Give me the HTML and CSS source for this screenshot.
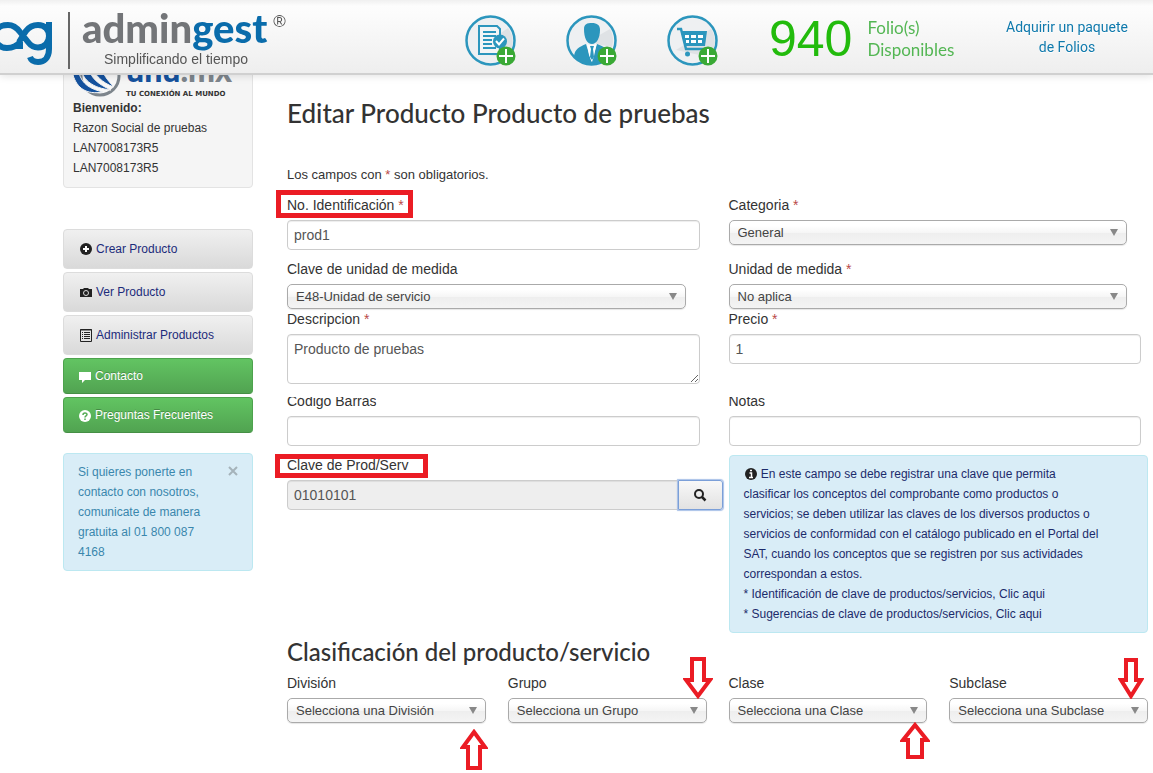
FILE: index.html
```html
<!DOCTYPE html>
<html lang="es">
<head>
<meta charset="utf-8">
<meta name="viewport" content="width=device-width, initial-scale=1">
<title>Editar Producto - admingest</title>
<link rel="stylesheet" href="styles.css">
</head>
<body>
<header class="topbar">
  <div class="brand">
    <svg class="brand-mark" width="53" height="52" viewBox="0 0 53 52" aria-hidden="true">
      <g fill="none" stroke="#0a6cab" stroke-width="6">
        <path d="M20 34V27C17 31 13 33 7 33C0 33 -5 28 -5 21S0 10 8 10C13 10 17 13 20 17L28 27C31 31 34 32.500 38 32.500C45 32.500 49 27 49 21S45 10 38 10C33 10 29 12 26 16L19 27"/>
        <path d="M49 7V34C49 43 44 47 38 47C34 47 31 45 30 42"/>
      </g>
    </svg>
    <div class="brand-text">
      <div class="brand-name">admin<span>gest</span><sup>®</sup></div>
      <div class="brand-slogan">Simplificando el tiempo</div>
    </div>
  </div>
  <nav class="shortcuts">
    <a href="#" aria-label="Nueva factura">
      <svg width="52" height="52" viewBox="0 0 52 52">
        <circle cx="25.500" cy="25.500" r="24" fill="#eef0f2" stroke="#2c96bd" stroke-width="2.500"/>
        <path d="M30 22L43 13A23 23 0 0 1 42 42L14 39Z" fill="#dfe2e5"/>
        <path d="M14 11H32L35 14V39H14Z" fill="#f3f5f6" stroke="#2c96bd" stroke-width="2"/>
        <path d="M18 17H31M18 21H31M18 25H27M18 29H27M18 33H31" stroke="#2c96bd" stroke-width="2"/>
        <circle cx="35" cy="26.500" r="7" fill="#2c96bd"/>
        <path d="M31 26L34 29.500L39 23.500" fill="none" stroke="#fff" stroke-width="2"/>
        <circle cx="41" cy="41" r="9.500" fill="#3aa935"/><path d="M41 34V48M34 41H48" stroke="#fff" stroke-width="2"/>
      </svg>
    </a>
    <a href="#" aria-label="Nuevo cliente">
      <svg width="52" height="52" viewBox="0 0 52 52">
        <circle cx="25.500" cy="25.500" r="24" fill="#eef0f2" stroke="#2c96bd" stroke-width="2.500"/>
        <path d="M30 22L44 14A23 23 0 0 1 46 32L30 29Z" fill="#dfe2e5"/>
        <path d="M18 14C18 9 21 8 26 8S34 10 34 15C34 22 31 29 26 29S18 23 18 14Z" fill="#2c96bd"/>
        <path d="M8 41C9 34 13 32 20 29L25.500 47L31 29C38 32 42 33 43 41C39 47 33 49.500 25.500 49.500S12 47 8 41Z" fill="#2c96bd"/>
        <path d="M21 29L25.500 31L30.500 29L28 41L26 47L23 40Z" fill="#fff"/>
        <path d="M24 31H28L27 34L28 42L26 45L24 42L25 34Z" fill="#2c96bd"/>
        <circle cx="41" cy="41" r="9.500" fill="#3aa935"/><path d="M41 34V48M34 41H48" stroke="#fff" stroke-width="2"/>
      </svg>
    </a>
    <a href="#" aria-label="Comprar">
      <svg width="52" height="52" viewBox="0 0 52 52">
        <circle cx="25.500" cy="25.500" r="24" fill="#eef0f2" stroke="#2c96bd" stroke-width="2.500"/>
        <path d="M30 22L44 14A23 23 0 0 1 42 42L9 35Z" fill="#dfe2e5"/>
        <path d="M10 14H14L19 34H38" fill="none" stroke="#2c96bd" stroke-width="2.500"/>
        <path d="M15 16H40L38 31H19Z" fill="#2c96bd"/>
        <path d="M18 20H22V23H18ZM24 20H29V23H24ZM31 20H36V23H31ZM19 25H22V28H19ZM24 25H29V28H24ZM31 25H35V28H31Z" fill="#fff"/>
        <circle cx="20.500" cy="39" r="2.500" fill="#2c96bd"/>
        <circle cx="41" cy="41" r="9.500" fill="#3aa935"/><path d="M41 34V48M34 41H48" stroke="#fff" stroke-width="2"/>
      </svg>
    </a>
  </nav>
  <div class="folios"><strong>940</strong><span>Folio(s)<br>Disponibles</span></div>
  <a class="buy" href="#">Adquirir un paquete<br>de Folios</a>
</header>

<div class="page">
  <aside class="sidebar">
    <section class="account">
      <div class="company">
        <svg width="48" height="48" viewBox="0 0 48 48" aria-hidden="true">
          <circle cx="27" cy="25" r="19" fill="#f8f8f8" stroke="#7d858c" stroke-width="3"/>
          <path d="M0 24C4 37 13 44 30 41C17 38 9 33 6 22ZM8 19C11 29 19 37 38 39C25 33 19 28 15 17ZM18 15C22 24 29 32 41 36C34 29 30 23 26 12Z" fill="#15529e" stroke="#f4f4f4"/>
        </svg>
        <div class="company-text">
          <div class="company-name">unu<span>.mx</span></div>
          <div class="company-tag">TU CONEXIÓN AL MUNDO</div>
        </div>
      </div>
      <div class="account-data"><b>Bienvenido:</b><br>Razon Social de pruebas<br>LAN7008173R5<br>LAN7008173R5</div>
    </section>
    <nav class="menu">
      <a class="item" href="#"><svg width="14" height="14" viewBox="0 0 14 14"><circle cx="7" cy="7" r="6" fill="#222"/><path d="M7 4V10M4 7H10" stroke="#fff" stroke-width="2"/></svg>Crear Producto</a>
      <a class="item" href="#"><svg width="14" height="14" viewBox="0 0 14 14"><path d="M1 4H4L5 3H9L10 4H13V12H1Z" fill="#222"/><circle cx="7" cy="8" r="2.500" fill="#222" stroke="#ddd"/></svg>Ver Producto</a>
      <a class="item" href="#"><svg width="14" height="14" viewBox="0 0 14 14"><path d="M1.500 1.500H12.500V13.500H1.500Z" fill="none" stroke="#222"/><path d="M1 2H13M3 4.500H4M5 4.500H11M3 6.500H4M5 6.500H11M3 8.500H4M5 8.500H11M3 10.500H4M5 10.500H11" stroke="#222"/></svg>Administrar Productos</a>
      <a class="item green" href="#"><svg width="14" height="14" viewBox="0 0 14 14"><path d="M1 3H13V11H7L4 14V11H1Z" fill="#fff"/></svg>Contacto</a>
      <a class="item green" href="#"><svg width="14" height="14" viewBox="0 0 14 14"><circle cx="7" cy="8" r="6" fill="#fff"/><path d="M5 7C5 4.500 9 4.500 9 6.500C9 8 7 7.800 7 9.500M7 10.500V12" fill="none" stroke="#57ac57" stroke-width="1.500"/></svg>Preguntas Frecuentes</a>
    </nav>
    <div class="alert contact">
      <p>Si quieres ponerte en contacto con nosotros, comunicate de manera gratuita al 01 800 087 4168</p>
      <button class="close" type="button" aria-label="Cerrar"><svg width="10" height="10" viewBox="0 0 10 10"><path d="M1 1L9 9M9 1L1 9" stroke="#a5b3ba" stroke-width="2"/></svg></button>
    </div>
  </aside>

  <main>
    <h1>Editar Producto Producto de pruebas</h1>
    <form>
      <p class="note">Los campos con <i>*</i> son obligatorios.</p>
      <div class="row spaced">
        <div class="field"><label class="marked" for="ident">No. Identificación <i>*</i></label><input id="ident" type="text" value="prod1"></div>
        <div class="field"><label for="cat">Categoria <i>*</i></label><div class="select"><select id="cat"><option>General</option></select></div></div>
      </div>
      <div class="row">
        <div class="field"><label for="clave">Clave de unidad de medida</label><div class="select"><select id="clave"><option>E48-Unidad de servicio</option></select></div></div>
        <div class="field"><label for="unidad">Unidad de medida <i>*</i></label><div class="select"><select id="unidad"><option>No aplica</option></select></div></div>
      </div>
      <div class="row description">
        <div class="field"><label for="desc">Descripcion <i>*</i></label><textarea id="desc">Producto de pruebas</textarea></div>
        <div class="field"><label for="precio">Precio <i>*</i></label><input id="precio" type="text" value="1"></div>
      </div>
      <div class="row spaced">
        <div class="field"><label class="cut" for="barras">Código Barras</label><input id="barras" type="text"></div>
        <div class="field"><label class="cut" for="notas">Notas</label><input id="notas" type="text"></div>
      </div>
      <div class="row">
        <div class="field"><label class="marked wide" for="prodserv">Clave de Prod/Serv</label>
          <div class="search"><input id="prodserv" type="text" value="01010101" readonly><button type="button" aria-label="Buscar"><svg width="14" height="14" viewBox="0 0 14 14"><circle cx="6" cy="6" r="4" fill="none" stroke="#222" stroke-width="2"/><path d="M9 9L12.500 12.500" stroke="#222" stroke-width="2.500"/></svg></button></div>
        </div>
        <div class="alert info"><svg width="14" height="14" viewBox="0 0 14 14"><circle cx="7" cy="7" r="6" fill="#222"/><path d="M6 3.500H8M5.500 6H7.500V10M5 10.500H9" fill="none" stroke="#fff" stroke-width="1.500"/></svg> En este campo se debe registrar una clave que permita clasificar los conceptos del comprobante como productos o servicios; se deben utilizar las claves de los diversos productos o servicios de conformidad con el catálogo publicado en el Portal del SAT, cuando los conceptos que se registren por sus actividades correspondan a estos.<br><a href="#">* Identificación de clave de productos/servicios, Clic aqui</a><br><a href="#">* Sugerencias de clave de productos/servicios, Clic aqui</a></div>
      </div>
      <h2>Clasificación del producto/servicio</h2>
      <div class="row quarters">
        <div class="field"><label for="division">División</label><div class="select"><select id="division"><option>Selecciona una División</option></select><svg class="arrow up low" width="28" height="42" viewBox="0 0 28 42"><path d="M14 3L25 18H20V39H8V18H3Z"/></svg></div></div>
        <div class="field"><label for="grupo">Grupo</label><div class="select"><select id="grupo"><option>Selecciona un Grupo</option></select><svg class="arrow down" width="30" height="42" viewBox="0 0 30 42"><path d="M9 2H21V23H27L15 39L3 23H9Z"/></svg></div></div>
        <div class="field"><label for="clase">Clase</label><div class="select"><select id="clase"><option>Selecciona una Clase</option></select><svg class="arrow up" width="30" height="38" viewBox="0 0 30 38"><path d="M15 3L27 18H22V35H8V18H3Z"/></svg></div></div>
        <div class="field"><label for="subclase">Subclase</label><div class="select"><select id="subclase"><option>Selecciona una Subclase</option></select><svg class="arrow down right" width="26" height="41" viewBox="0 0 26 41"><path d="M8 2H18V22H23L13 38L3 22H8Z"/></svg></div></div>
      </div>
    </form>
  </main>
</div>
</body>
</html>
```
FILE: styles.css
```css
*, *::before, *::after { box-sizing: border-box; }
body {
  margin: 0;
  background: #fff;
  color: #333;
  font: 12px/20px "Liberation Sans", Arial, sans-serif;
}
a { text-decoration: none; }
p { margin: 0; }
i { color: #b94a48; font-style: normal; }

/* Top bar */
.topbar {
  position: fixed;
  top: 0;
  left: 0;
  right: 0;
  z-index: 10;
  display: grid;
  grid-template-columns: 465px 304px 198px 1fr;
  align-items: center;
  height: 75px;
  border-bottom: 2px solid #d0d0d0;
  background: linear-gradient(#f0f0f0, #fdfdfd 6px, #fafafa 20px, #eee);
  box-shadow: 0 1px 8px rgba(0, 0, 0, .12);
}
.brand { display: flex; align-items: center; }
.brand-mark { margin-top: 8px; flex: none; }
.brand-text {
  margin-left: 15px;
  padding-left: 12px;
  border-left: 2px solid #666;
  height: 57px;
  margin-top: 8px;
}
.brand-name {
  height: 34px;
  color: #737578;
  font: 900 40px/32px Lato, sans-serif;
  white-space: nowrap;
}
.brand-name span { color: #0a6cab; }
.brand-name sup {
  margin-left: 6px;
  font: 17px/17px "Liberation Sans", sans-serif;
  color: #555;
  vertical-align: 16px;
}
.brand-slogan {
  padding-left: 22px;
  color: #555;
  font-size: 14px;
  line-height: 26px;
}
.shortcuts { display: flex; gap: 49px; padding-top: 8px; }
.shortcuts svg { display: block; }
.folios { display: flex; align-items: center; gap: 15px; padding-top: 5px; }
.folios strong { color: #22bb0c; font: 50px/50px "Liberation Sans", sans-serif; }
.folios span { color: #53b653; font: 17px/22px Lato, sans-serif; }
.buy {
  justify-self: center;
  padding-left: 14px;
  color: #0f79ac;
  font: 14px/20px Roboto, sans-serif;
  text-align: center;
  text-shadow: 0 1px 0 #fff;
}

/* Page */
.page {
  display: flex;
  align-items: flex-start;
  gap: 34px;
  padding: 44px 5px 50px 63px;
}
.sidebar { flex: 0 0 190px; min-width: 0; }
.account {
  padding: 6px 9px 9px;
  border: 1px solid #e3e3e3;
  border-radius: 4px;
  background: #f5f5f5;
}
.company { display: flex; height: 47px; }
.company svg { flex: none; }
.company-text { margin-left: 5px; }
.company-name { color: #15529e; font: 900 32px/38px Lato, sans-serif; }
.company-name span { color: #7d858c; }
.company-tag { color: #333; font: bold 7px/10px "DejaVu Sans", sans-serif; white-space: nowrap; }
.menu { display: grid; gap: 3px; margin: 41px 0 20px; }
.item {
  display: flex;
  align-items: center;
  gap: 3px;
  height: 40px;
  padding-left: 15px;
  border: 1px solid #dcdcdc;
  border-radius: 4px;
  background: linear-gradient(#f0f0f0, #d9d9d9);
  color: #1c2b7b;
}
.item.green {
  height: 36px;
  padding-left: 14px;
  border-color: #4da24d #4da24d #458f45;
  background: linear-gradient(#62c462, #51a351);
  color: #fff;
  text-shadow: 0 -1px 0 rgba(0, 0, 0, .25);
}
.alert {
  border: 1px solid #bce8f1;
  border-radius: 4px;
  background: #d9edf7;
  padding: 8px 14px;
}
.contact { display: flex; justify-content: space-between; color: #3a87ad; }
.contact p { flex: 0 0 134px; }
.close { flex: none; height: 18px; padding: 0; border: 0; background: none; }
.close svg { display: block; }

main { flex: 1; min-width: 0; padding-top: 49px; }
h1, h2 {
  margin: 0;
  font: 500 26px/40px Lato, sans-serif;
  color: #333;
}
h1 { margin-bottom: 32px; }
h2 { font-size: 24px; line-height: 38px; padding-bottom: 2px; }
.note { margin-bottom: 10px; font-size: 13px; }

/* Form */
.row { display: grid; grid-template-columns: 1fr 1fr; gap: 22px; }
.row.spaced { margin-bottom: 9px; }
.row.description { margin-bottom: 7px; }
.row.quarters { grid-template-columns: repeat(4, 1fr); }
.field { min-width: 0; }
label {
  display: block;
  width: fit-content;
  margin-bottom: 5px;
  font-size: 14px;
  line-height: 20px;
}
.cut { clip-path: inset(6px 0 0 0); }
.marked { position: relative; }
.marked::after {
  content: "";
  position: absolute;
  top: -5px;
  left: -11px;
  width: 137px;
  height: 28px;
  border: 5px solid #eb1c24;
}
.marked.wide::after { top: -1px; left: -12px; width: 153px; height: 24px; }
input, textarea {
  display: block;
  width: calc(100% - 7px);
  height: 30px;
  padding: 4px 6px;
  border: 1px solid #ccc;
  border-radius: 4px;
  background: #fff;
  box-shadow: inset 0 1px 1px rgba(0, 0, 0, .075);
  color: #555;
  font: 14px/20px "Liberation Sans", Arial, sans-serif;
}
textarea { height: 50px; resize: vertical; }
.select { position: relative; width: 95%; }
.quarters .select { width: 100%; }
.select::after {
  content: "";
  position: absolute;
  top: 9px;
  right: 9px;
  border: 4px solid transparent;
  border-top: 7px solid #888;
  border-bottom: 0;
  pointer-events: none;
}
select {
  display: block;
  width: 100%;
  height: 25px;
  padding: 1px 24px 0 8px;
  border: 1px solid #aaa;
  border-radius: 5px;
  appearance: none;
  background: linear-gradient(#fff 20%, #f6f6f6 50%, #eee 52%, #f4f4f4 100%);
  box-shadow: 0 1px 1px rgba(0, 0, 0, .1);
  color: #444;
  font: 13px/22px "Liberation Sans", Arial, sans-serif;
}
.search { display: flex; width: calc(100% + 16px); }
.search input { flex: 1; min-width: 0; border-radius: 4px 0 0 4px; background: #eee; }
.search button {
  flex: 0 0 45px;
  display: grid;
  place-items: center;
  padding: 0;
  border: 1px solid #7b9fd8;
  border-radius: 0 3px 3px 0;
  background: linear-gradient(#f8f8f8, #e2e2e2);
  box-shadow: 0 0 1px 1px #a9c1e8;
}
.info { padding-right: 45px; color: #1c2b6b; }
.info svg { vertical-align: -3px; }
.info a { color: inherit; }
.arrow {
  position: absolute;
  z-index: 2;
  fill: #fff;
  stroke: #eb1c24;
  stroke-width: 4;
  pointer-events: none;
}
.arrow.up { top: 24px; right: -3px; }
.arrow.low { top: 31px; right: -2px; }
.arrow.down { bottom: 24px; right: -6px; }
.arrow.right { right: 4px; }
```
